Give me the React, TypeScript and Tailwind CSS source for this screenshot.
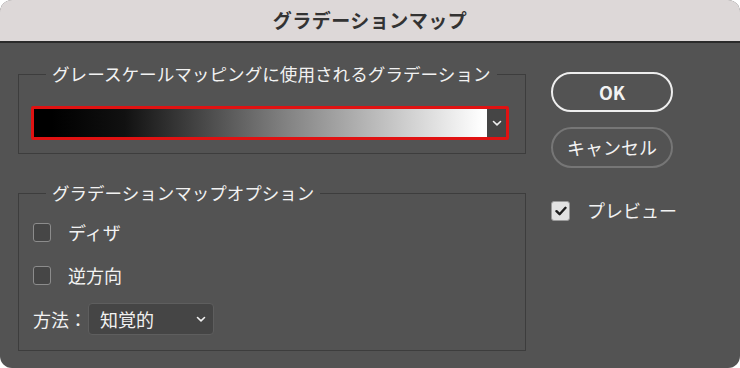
import React from "react";

const font = { fontFamily: '"Noto Sans CJK JP", "Noto Sans", sans-serif' };

function Chevron({ className = "" }: { className?: string }) {
  return (
    <svg width="10" height="7" viewBox="0 0 10 7" className={className}>
      <path d="M1.5 1.5 L5 4.8 L8.5 1.5" fill="none" stroke="#f0f0f0" strokeWidth="1.6" strokeLinecap="round" strokeLinejoin="round" />
    </svg>
  );
}

function Box({ checked = false }: { checked?: boolean }) {
  if (checked) {
    return (
      <div className="w-[19px] h-[20px] shrink-0 rounded-[3px] bg-[#e2e2e2] border border-[#9a9a9a] flex items-center justify-center">
        <svg width="12" height="10" viewBox="0 0 12 10">
          <path d="M1.5 5.2 L4.6 8.2 L10.5 1.8" fill="none" stroke="#1e1e1e" strokeWidth="2.4" strokeLinecap="round" strokeLinejoin="round" />
        </svg>
      </div>
    );
  }
  return <div className="w-[18px] h-[19px] shrink-0 rounded-[3px] bg-[#464646] border-[1.5px] border-[#8c8c8c]" />;
}

export default function App() {
  return (
    <div className="w-[740px] h-[368px] bg-white" style={font}>
      <div className="w-[740px] h-[368px] rounded-[12px] overflow-hidden flex flex-col bg-[#535353]">
        <div className="h-[43px] bg-[#ddd8d8] flex items-center justify-center text-[19px] font-bold text-[#333] tracking-[0.5px] border-b-2 border-[#2a2a2a]">
          グラデーションマップ
        </div>
        <div className="flex pl-[18px] pt-[19px] text-[18px] text-[#f2f2f2] whitespace-nowrap">
          <div className="w-[508px] flex flex-col">
            <fieldset className="border border-[#3d3d3d] pl-[12px] pr-[16px] h-[92px]">
              <legend className="ml-[15px] px-[6px] leading-[24px] text-[17.6px] whitespace-nowrap">グレースケールマッピングに使用されるグラデーション</legend>
              <div className="mt-[20px] h-[34px] border-[3px] border-[#e01212] rounded-[2px] flex bg-[#444]">
                <div className="flex-1 bg-[linear-gradient(to_right,#000_4%,#111_20%,#808080_55%,#fff_99%)]" />
                <div className="w-[19px] bg-[#454545] flex items-center justify-center">
                  <Chevron />
                </div>
              </div>
            </fieldset>
            <fieldset className="mt-[27px] border border-[#3d3d3d] pl-[14px] h-[170px]">
              <legend className="ml-[13px] px-[6px] leading-[24px] text-[17.5px] whitespace-nowrap">グラデーションマップオプション</legend>
              <div className="mt-[17px] flex items-center gap-[17px] h-[20px]">
                <Box />
                <span>ディザ</span>
              </div>
              <div className="mt-[23px] flex items-center gap-[17px] h-[20px]">
                <Box />
                <span>逆方向</span>
              </div>
              <div className="mt-[18px] flex items-center">
                <span className="w-[55px]">方法：</span>
                <div className="w-[126px] h-[32px] rounded-[4px] bg-[#454545] border border-[#5e5e5e] flex items-center justify-between pl-[11px] pr-[7px]">
                  <span>知覚的</span>
                  <Chevron />
                </div>
              </div>
            </fieldset>
          </div>
          <div className="ml-[25px] w-[170px] flex flex-col">
            <div className="mt-[10px] h-[40px] w-[122px] rounded-full border-2 border-[#eeeeee] flex items-center justify-center text-[18px] font-semibold">
              OK
            </div>
            <div className="mt-[15px] h-[41px] w-[122px] rounded-full border-2 border-[#767676] flex items-center justify-center text-[18px]">
              キャンセル
            </div>
            <div className="mt-[29px] flex items-center gap-[17px]">
              <Box checked />
              <span>プレビュー</span>
            </div>
          </div>
        </div>
      </div>
    </div>
  );
}
